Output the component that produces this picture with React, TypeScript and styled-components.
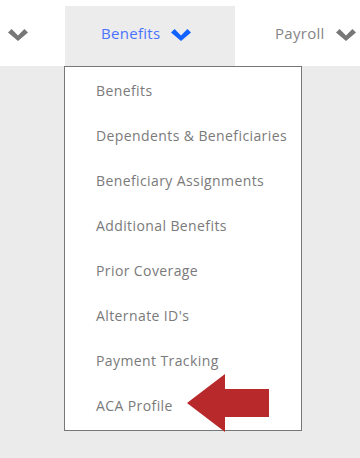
import React from 'react';
import styled, { createGlobalStyle } from 'styled-components';

const menuItems = [
  'Benefits',
  'Dependents & Beneficiaries',
  'Beneficiary Assignments',
  'Additional Benefits',
  'Prior Coverage',
  "Alternate ID's",
  'Payment Tracking',
  'ACA Profile',
];

const Chevron = ({ color }: { color: string }) => (
  <ChevronSvg viewBox="0 0 20 12" width={20} height={12} aria-hidden>
    <polygon points="0,3.6 3.6,0 10,6.4 16.4,0 20,3.6 10,12" fill={color} />
  </ChevronSvg>
);

const App = () => {
  return (
    <>
      <GlobalStyle />
      <Page>
        <NavBar>
          <NavItem $width={65} $padLeft={8}>
            <Chevron color="#777777" />
          </NavItem>
          <NavItem $width={170} $padLeft={36} $active>
            <NavLabel $active>Benefits</NavLabel>
            <Chevron color="#1262ff" />
            <Dropdown>
              {menuItems.map((item) => (
                <MenuItem key={item}>{item}</MenuItem>
              ))}
            </Dropdown>
            <Pointer viewBox="0 0 82 59" width={82} height={59} aria-hidden>
              <polygon points="0,29 38,0 38,15 82,15 82,43 38,43 38,58" fill="#b8292b" />
            </Pointer>
          </NavItem>
          <NavItem $width={125} $padLeft={40}>
            <NavLabel>Payroll</NavLabel>
            <Chevron color="#777777" />
          </NavItem>
        </NavBar>
      </Page>
    </>
  );
};

export default App;

const GlobalStyle = createGlobalStyle`
  html, body {
    margin: 0;
    padding: 0;
    background: #ebebeb;
  }

  body {
    font-family: 'Open Sans', 'Liberation Sans', sans-serif;
  }
`;

const Page = styled.div`
  width: 360px;
  height: 458px;
  overflow: hidden;
  background: #ebebeb;
`;

const NavBar = styled.nav`
  display: flex;
  align-items: flex-end;

  padding-top: 6px;
  height: 60px;
  background: #ffffff;
`;

const NavItem = styled.div<{ $width: number; $padLeft: number; $active?: boolean }>`
  position: relative;
  display: flex;
  flex-shrink: 0;
  gap: 11px;
  align-items: center;

  box-sizing: border-box;
  padding-left: ${({ $padLeft }) => $padLeft}px;
  padding-bottom: 7px;
  width: ${({ $width }) => $width}px;
  height: 60px;
  background: ${({ $active }) => ($active ? '#ececec' : '#ffffff')};
`;

const NavLabel = styled.span<{ $active?: boolean }>`
  font-size: 15px;
  letter-spacing: 0.3px;
  color: ${({ $active }) => ($active ? '#4a73ff' : '#858585')};
`;

const ChevronSvg = styled.svg`
  display: block;
  flex-shrink: 0;
  margin-top: 4px;
`;

const Dropdown = styled.ul`
  position: absolute;
  top: 60px;
  left: -1px;
  z-index: 2;

  box-sizing: border-box;
  margin: 0;
  border: 1px solid #777777;
  background: #ffffff;
  padding: 1px 0 2px;
  width: 238px;
  list-style: none;
`;

const MenuItem = styled.li`
  display: flex;
  align-items: center;

  padding-left: 31px;
  height: 45px;

  font-size: 14px;
  letter-spacing: 0.4px;
  white-space: nowrap;
  color: #7a7a7a;
`;

const Pointer = styled.svg`
  position: absolute;
  top: 368px;
  left: 122px;
  z-index: 3;
`;
